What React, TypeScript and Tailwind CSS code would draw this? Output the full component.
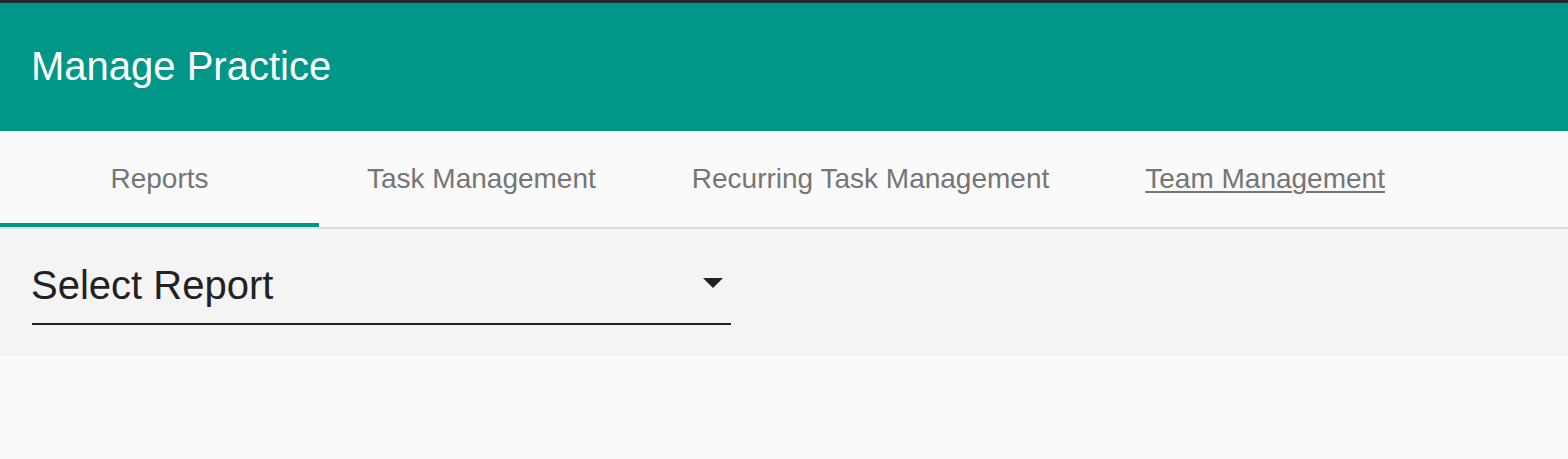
import React from 'react';

const tabs = ['Reports', 'Task Management', 'Recurring Task Management', 'Team Management'];

export default function App() {
  return (
    <div className="min-h-[459px] bg-[#fafafa] font-['Liberation_Sans',Arial,sans-serif]">
      {/* Header */}
      <header className="border-t-[3px] border-[#252932] bg-[#009688] h-[131px] flex items-center pl-[31px]">
        <h1 className="text-[40px] leading-none text-white -mt-[2px]">Manage Practice</h1>
      </header>

      {/* Tabs */}
      <nav className="flex bg-[#fafafa] border-b-2 border-[#dcdcdc] h-[98px]">
        {tabs.map((t, i) => (
          <div
            key={t}
            className={`relative flex items-center justify-center px-12 text-[28px] text-[#757575] ${i === 0 ? 'min-w-[319px]' : ''}`}
          >
            <span className={i === 3 ? 'underline underline-offset-[3px] decoration-2' : ''}>{t}</span>
            {i === 0 && <span className="absolute left-0 right-0 bottom-0 h-1 bg-[#009688]" />}
          </div>
        ))}
      </nav>

      {/* Select */}
      <section className="bg-[#f4f4f4] h-[127px] pl-[32px] pt-[33px]">
        <div className="w-[699px] h-[63px] border-b-2 border-[#222] flex items-start justify-between">
          <span className="text-[40px] leading-none text-[#212121] pt-[3px] -ml-px">Select Report</span>
          <svg width="20" height="10" viewBox="0 0 20 10" className="mt-[16px] mr-2">
            <path d="M0 0 L20 0 L10 10 Z" fill="#212121" />
          </svg>
        </div>
      </section>
    </div>
  );
}
